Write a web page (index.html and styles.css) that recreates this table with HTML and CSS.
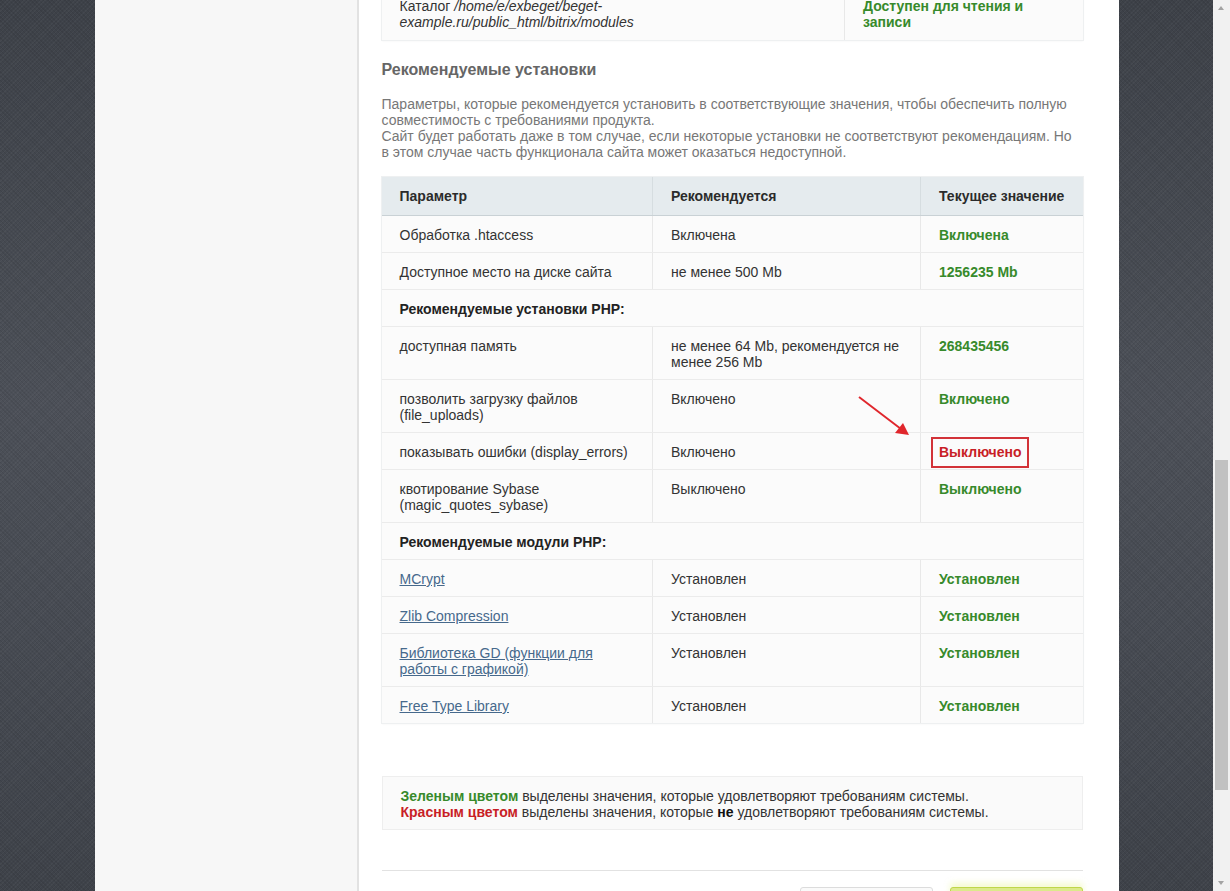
FILE: index.html
```html
<!DOCTYPE html>
<html lang="ru">
<head>
<meta charset="utf-8">
<title>Рекомендуемые установки</title>
<link rel="stylesheet" href="styles.css">
</head>
<body>
<div class="screen">
  <div class="desk">
    <div class="panel">
      <aside class="sidebar"></aside>
      <main class="main">
        <table class="grid top-grid">
          <colgroup><col class="c-wide"><col></colgroup>
          <tr>
            <td>Каталог <i>/home/e/exbeget/beget-example.ru/public_html/bitrix/modules</i></td>
            <td><b class="ok">Доступен для чтения и записи</b></td>
          </tr>
        </table>

        <h2 class="title">Рекомендуемые установки</h2>
        <p class="intro">Параметры, которые рекомендуется установить в соответствующие значения, чтобы обеспечить полную совместимость с требованиями продукта.<br>Сайт будет работать даже в том случае, если некоторые установки не соответствуют рекомендациям. Но в этом случае часть функционала сайта может оказаться недоступной.</p>

        <div class="table-wrap">
          <table class="grid">
            <colgroup><col class="c1"><col class="c2"><col></colgroup>
            <thead>
              <tr><th>Параметр</th><th>Рекомендуется</th><th>Текущее значение</th></tr>
            </thead>
            <tbody>
              <tr><td>Обработка .htaccess</td><td>Включена</td><td><b class="ok">Включена</b></td></tr>
              <tr><td>Доступное место на диске сайта</td><td>не менее 500 Mb</td><td><b class="ok">1256235 Mb</b></td></tr>
              <tr class="section"><td colspan="3">Рекомендуемые установки PHP:</td></tr>
              <tr><td>доступная память</td><td>не менее 64 Mb, рекомендуется не менее 256 Mb</td><td><b class="ok">268435456</b></td></tr>
              <tr><td>позволить загрузку файлов (file_uploads)</td><td>Включено</td><td><b class="ok">Включено</b></td></tr>
              <tr><td>показывать ошибки (display_errors)</td><td>Включено</td><td><b class="bad boxed">Выключено</b></td></tr>
              <tr><td>квотирование Sybase (magic_quotes_sybase)</td><td>Выключено</td><td><b class="ok">Выключено</b></td></tr>
              <tr class="section"><td colspan="3">Рекомендуемые модули PHP:</td></tr>
              <tr><td><a href="#">MCrypt</a></td><td>Установлен</td><td><b class="ok">Установлен</b></td></tr>
              <tr><td><a href="#">Zlib Compression</a></td><td>Установлен</td><td><b class="ok">Установлен</b></td></tr>
              <tr><td><a href="#">Библиотека GD (функции для работы с графикой)</a></td><td>Установлен</td><td><b class="ok">Установлен</b></td></tr>
              <tr><td><a href="#">Free Type Library</a></td><td>Установлен</td><td><b class="ok">Установлен</b></td></tr>
            </tbody>
          </table>
          <svg class="arrow" width="60" height="46" viewBox="0 0 60 46" aria-hidden="true">
            <line x1="2" y1="2" x2="44" y2="34" stroke="#e0262c" stroke-width="2"/>
            <polygon points="52,40 38,38 46,28" fill="#e0262c"/>
          </svg>
        </div>

        <div class="legend">
          <b class="ok">Зеленым цветом</b> выделены значения, которые удовлетворяют требованиям системы.<br>
          <b class="bad">Красным цветом</b> выделены значения, которые <b>не</b> удовлетворяют требованиям системы.
        </div>

        <hr class="divider">

        <div class="buttons">
          <span class="btn btn-back"></span>
          <span class="btn btn-next"></span>
        </div>
      </main>
    </div>
  </div>
  <div class="scrollbar">
    <span class="arrow-up"></span>
    <span class="thumb"></span>
    <span class="arrow-down"></span>
  </div>
</div>
</body>
</html>
```
FILE: styles.css
```css
html, body {
  margin: 0;
  padding: 0;
  height: 891px;
  overflow: hidden;
}
body {
  font-family: "Liberation Sans", Arial, sans-serif;
  font-size: 14px;
  line-height: 16px;
  color: #333;
}
.screen {
  display: flex;
  height: 891px;
}
.desk {
  flex: 1;
  display: flex;
  justify-content: center;
  background-color: #464a52;
  background-image:
    repeating-linear-gradient(45deg, rgba(0,0,0,0.07) 0 1px, transparent 1px 3px),
    repeating-linear-gradient(-45deg, rgba(255,255,255,0.03) 0 1px, transparent 1px 3px),
    linear-gradient(180deg, #3d4148 0%, #4c5058 45%, #474b53 70%, #3e4249 100%);
}
.panel {
  width: 1024px;
  display: flex;
  background: #fff;
}
.sidebar {
  width: 262px;
  background: #f7f7f7;
  border-right: 2px solid #e2e2e2;
  flex-shrink: 0;
}
.main {
  flex: 1;
  padding: 0 36px 0 23px;
  background: #fff;
}

/* tables */
.grid {
  width: 100%;
  border-collapse: collapse;
  table-layout: fixed;
  background: #fbfbfb;
  box-shadow: 0 0 0 1px #eef0f1, 0 1px 2px rgba(0,0,0,0.06);
}
.grid td, .grid th {
  padding: 11px 18px 9px;
  text-align: left;
  vertical-align: top;
  border-bottom: 1px solid #ebebeb;
}
.grid td + td, .grid th + th {
  border-left: 1px solid #e8e8e8;
}
.grid th {
  background: #e5ebee;
  border-bottom: 1px solid #c9d1d5;
  font-weight: bold;
  color: #2b2b2b;
  padding: 11px 18px 11px;
}
.grid th + th { border-left-color: #d6dde0; }
.grid tbody tr:last-child td { border-bottom: none; }
.grid .section td { font-weight: bold; color: #222; }
.c-wide { width: 463px; }
.c1 { width: 271px; }
.c2 { width: 268px; }

.top-grid { margin-top: -12px; }
.top-grid td { padding: 10px 18px 10px; border-bottom: none; }

.ok { color: #378a2b; font-weight: bold; }
.bad { color: #c81e26; font-weight: bold; }
.boxed {
  display: inline-block;
  border: 2px solid #d23238;
  padding: 5px 6px 6px;
  margin: -8px 0 -9px -8px;
}

.grid a {
  color: #46698c;
  text-decoration: underline;
}

.title {
  margin: 20px 0 16px;
  font-size: 16px;
  line-height: 20px;
  font-weight: bold;
  color: #666;
}
.intro {
  margin: 0 0 17px;
  color: #777;
}

.table-wrap {
  position: relative;
}
.arrow {
  position: absolute;
  left: 475px;
  top: 218px;
}

.legend {
  margin-top: 53px;
  background: #fafafa;
  border: 1px solid #eeeeee;
  padding: 11px 18px 9px;
  color: #333;
}
.legend b:not(.ok):not(.bad) { color: #111; }

.divider {
  margin: 40px 0 0;
  border: 0;
  border-top: 1px solid #e2e2e2;
  height: 0;
}

.buttons {
  display: flex;
  justify-content: flex-end;
  gap: 17px;
  margin-top: 16px;
  padding-right: 0;
}
.btn {
  display: block;
  height: 30px;
  border-radius: 3px;
}
.btn-back {
  width: 131px;
  border: 1px solid #dcdcdc;
  background: #fafafa;
}
.btn-next {
  width: 131px;
  border: 1px solid #bfd64a;
  background: #dcea8a;
  box-shadow: 0 -4px 6px rgba(225,240,120,0.35);
}

/* fake scrollbar */
.scrollbar {
  width: 17px;
  flex-shrink: 0;
  background: #f1f1f1;
  position: relative;
}
.arrow-up, .arrow-down {
  position: absolute;
  left: 5px;
  width: 0;
  height: 0;
  border-left: 3.5px solid transparent;
  border-right: 3.5px solid transparent;
}
.arrow-up { top: 6px; border-bottom: 4px solid #a3a3a3; }
.arrow-down { bottom: 6px; border-top: 4px solid #a3a3a3; }
.thumb {
  position: absolute;
  left: 2px;
  right: 2px;
  top: 460px;
  height: 330px;
  background: #c1c1c1;
}
```
